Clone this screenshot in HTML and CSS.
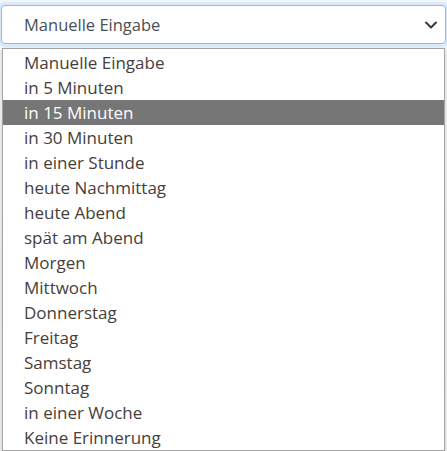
FILE: index.html
```html
<!DOCTYPE html>
<html lang="de">
<head>
<meta charset="utf-8">
<title>Erinnerung</title>
<link rel="stylesheet" href="styles.css">
</head>
<body>
<div class="page">
  <div class="select">
    <span class="select-value">Manuelle Eingabe</span>
    <svg class="chevron" width="14" height="10" viewBox="0 0 14 10"><path d="M2 2.5 L7 7.5 L12 2.5" fill="none" stroke="#343a40" stroke-width="2" stroke-linecap="round" stroke-linejoin="round"/></svg>
  </div>
  <ul class="options">
    <li class="option">Manuelle Eingabe</li>
    <li class="option">in 5 Minuten</li>
    <li class="option selected">in 15 Minuten</li>
    <li class="option">in 30 Minuten</li>
    <li class="option">in einer Stunde</li>
    <li class="option">heute Nachmittag</li>
    <li class="option">heute Abend</li>
    <li class="option">spät am Abend</li>
    <li class="option">Morgen</li>
    <li class="option">Mittwoch</li>
    <li class="option">Donnerstag</li>
    <li class="option">Freitag</li>
    <li class="option">Samstag</li>
    <li class="option">Sonntag</li>
    <li class="option">in einer Woche</li>
    <li class="option">Keine Erinnerung</li>
  </ul>
</div>
</body>
</html>
```
FILE: styles.css
```css
html, body {
  margin: 0;
  padding: 0;
  background: #fff;
  font-family: "Open Sans", "Noto Sans", sans-serif;
}
.page {
  width: 447px;
  height: 451px;
  overflow: hidden;
  padding-top: 5px;
  box-sizing: border-box;
  background: linear-gradient(#f3f6f9, #eceff2);
}
.select {
  margin-left: 1px;
  width: 445px;
  height: 39px;
  box-sizing: border-box;
  border: 1px solid #80bdff;
  border-radius: 4px;
  background: #fff;
  box-shadow: 0 0 0 3px rgba(0, 123, 255, 0.1);
  display: flex;
  align-items: center;
  padding: 0 7px 0 22px;
}
.select-value {
  flex: 1;
  font-size: 16.5px;
  color: #495057;
}
.chevron {
  display: block;
}
.options {
  list-style: none;
  margin: 4px 0 0 2px;
  padding: 1px 0 0 0;
  width: 443px;
  box-sizing: border-box;
  border: 1px solid #a5a5a5;
  background: #fff;
  box-shadow: 0 2px 4px rgba(0, 0, 0, 0.15);
}
.option {
  height: 25px;
  line-height: 25px;
  padding-left: 21px;
  font-size: 17px;
  color: #45403c;
  white-space: nowrap;
}
.option.selected {
  background: #767676;
  color: #fff;
}
```
